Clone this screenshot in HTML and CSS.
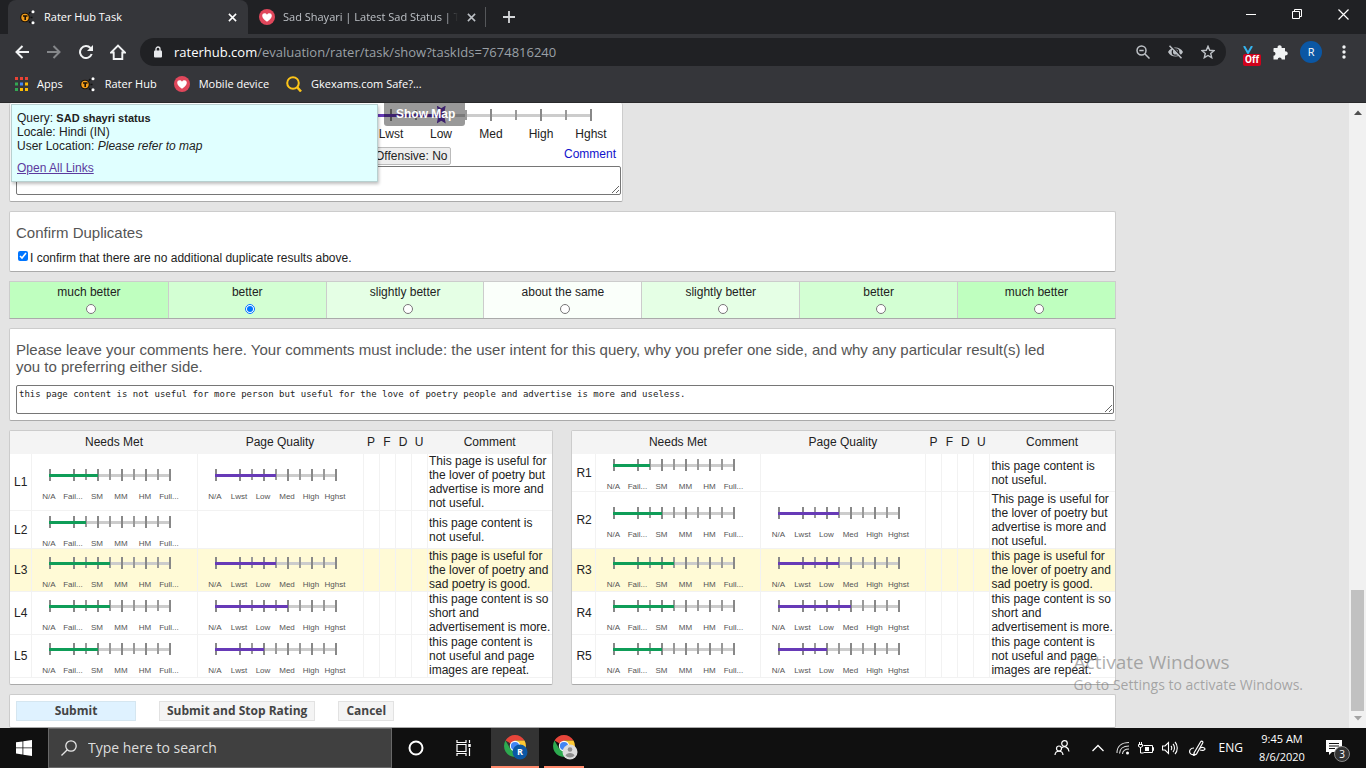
FILE: index.html
```html
<!DOCTYPE html>
<html lang="en">
<head>
<meta charset="utf-8">
<title>Rater Hub Task</title>
<link rel="stylesheet" href="styles.css">
</head>
<body>
<svg class="defs" aria-hidden="true">
  <symbol id="hub" viewBox="0 0 16 16"><circle cx="5" cy="8.500" r="4.800" fill="#1b1206"/><circle cx="5" cy="8.500" r="3.700" fill="#f29c1a"/><path d="M3 7h4.500M5.200 7v4" stroke="#1b1206" stroke-width="1.600"/><path d="M9 4.500l1.500-1.500M10.500 8.500h2M9 12.500l2 1.500" stroke="#111" stroke-width="1.600"/><circle cx="13" cy="2.800" r="1.500" fill="#fff"/><circle cx="13" cy="13.700" r="1.500" fill="#fff"/></symbol>
  <symbol id="heart" viewBox="0 0 16 16"><circle cx="8" cy="8" r="8" fill="#e0475b"/><path d="M8 12.800C5 10.500 3.200 8.800 3.200 6.700c0-2.700 3.400-3.300 4.800-1 1.400-2.300 4.800-1.700 4.800 1 0 2.100-1.800 3.800-4.800 6.100z" fill="#fff"/></symbol>
  <symbol id="close" viewBox="0 0 10 10"><path d="M1 1l8 8M9 1L1 9" fill="none" stroke="currentColor" stroke-width="1.700"/></symbol>
  <symbol id="chrome" viewBox="0 0 22 22"><path d="M11 11L1.500 5.500A11 11 0 0 1 20.500 5.500H11z" fill="#e6453a"/><path d="M11 5.500h9.500A11 11 0 0 1 11 22l4.800-8.300z" fill="#fcc934"/><path d="M1.500 5.500A11 11 0 0 0 11 22l4.800-8.300L11 11l-4.800 2.700z" fill="#2da94f"/><circle cx="11" cy="11" r="5.200" fill="#fff"/><circle cx="11" cy="11" r="4.100" fill="#4285f4"/></symbol>
</svg>

<header class="browser">
  <div class="tabstrip">
    <div class="tab tab-active">
      <svg class="favicon"><use href="#hub"/></svg><span class="tab-title">Rater Hub Task</span>
      <button class="icon-btn tab-close" aria-label="Close tab"><svg><use href="#close"/></svg></button>
    </div>
    <div class="tab tab-idle">
      <svg class="favicon"><use href="#heart"/></svg><span class="tab-title fade">Sad Shayari | Latest Sad Status | T</span>
      <button class="icon-btn tab-close" aria-label="Close tab"><svg><use href="#close"/></svg></button>
    </div>
    <button class="icon-btn new-tab" aria-label="New tab"><svg width="12" height="12" viewBox="0 0 12 12"><path d="M6 0v12M0 6h12" stroke="currentColor" stroke-width="1.800"/></svg></button>
    <div class="window-controls">
      <button class="icon-btn" aria-label="Minimize"><svg width="10" height="10" viewBox="0 0 10 10"><path d="M0 5.500h10" stroke="#fff"/></svg></button>
      <button class="icon-btn" aria-label="Restore"><svg width="10" height="10" viewBox="0 0 10 10" fill="none" stroke="#fff"><path d="M.5 2.500h7v7h-7zM2.500 2.500v-2h7v7h-2"/></svg></button>
      <button class="icon-btn" aria-label="Close"><svg width="11" height="11" viewBox="0 0 11 11"><path d="M.5.500l10 10M10.500.500l-10 10" stroke="#fff" stroke-width="1.200"/></svg></button>
    </div>
  </div>
  <div class="toolbar">
    <div class="nav">
      <button class="icon-btn" aria-label="Back"><svg width="14" height="14" viewBox="0 0 14 14" fill="none" stroke="#f1f3f4" stroke-width="2"><path d="M14 7H1.500M7.500 1l-6 6 6 6"/></svg></button>
      <button class="icon-btn" aria-label="Forward"><svg width="14" height="14" viewBox="0 0 14 14" fill="none" stroke="#85878a" stroke-width="2"><path d="M0 7h12.500M6.500 1l6 6-6 6"/></svg></button>
      <button class="icon-btn" aria-label="Reload"><svg width="14" height="14" viewBox="0 0 14 14"><path d="M12.700 9A6 6 0 1 1 11.500 3" fill="none" stroke="#f1f3f4" stroke-width="2"/><path d="M14 0v6H8z" fill="#f1f3f4"/></svg></button>
      <button class="icon-btn" aria-label="Home"><svg width="16" height="16" viewBox="0 0 16 16"><path d="M1 8.500h2.700V15h8.600V8.500H15L8 1.500z" fill="none" stroke="#f1f3f4" stroke-width="1.900"/></svg></button>
    </div>
    <div class="omnibox">
      <svg class="lock" width="8" height="12" viewBox="0 0 8 12"><path d="M2 5V3a2 2 0 0 1 4 0v2" fill="none" stroke="#e8eaed" stroke-width="1.300"/><rect y="4.500" width="8" height="7" rx="1" fill="#e8eaed"/></svg>
      <div class="url"><b>raterhub.com</b>/evaluation/rater/task/show?taskIds=7674816240</div>
      <svg width="14" height="14" viewBox="0 0 14 14" fill="none" stroke="#bdc1c6" stroke-width="1.500"><circle cx="5.500" cy="5.500" r="4.500"/><path d="M9 9l4.500 4.500M3.300 5.500h4.400"/></svg>
      <svg width="15" height="14" viewBox="0 0 15 14"><path d="M0 7C3 1 12 1 15 7 12 13 3 13 0 7z" fill="#bdc1c6"/><circle cx="7.500" cy="7" r="3.200" fill="none" stroke="#202124" stroke-width="1.300"/><path d="M2.500 0l12 12.500" stroke="#202124" stroke-width="1.500"/><path d="M1.500.800l12 12.500" stroke="#bdc1c6" stroke-width="1.500"/></svg>
      <svg width="14" height="14" viewBox="0 0 14 14"><path d="M7 1.300l1.700 4 4.200.4-3.200 2.800 1 4.200L7 10.500l-3.700 2.200 1-4.200L1.100 5.700l4.200-.4z" fill="none" stroke="#bdc1c6" stroke-width="1.400"/></svg>
    </div>
    <div class="extensions">
      <div class="ext"><svg width="10" height="8" viewBox="0 0 10 8"><path d="M1 0l4 7 4-7" fill="none" stroke="#35b4ee" stroke-width="2"/></svg><span>Off</span></div>
      <button class="icon-btn" aria-label="Extensions"><svg width="15" height="15" viewBox="0 0 15 15"><path d="M1 3h3.600a2.100 2.100 0 1 1 4 0H12v3.400a2.100 2.100 0 1 1 0 4V14.500H8.700a2 2 0 1 0-4 0H.5V10.700a2 2 0 1 0 0-4V3.500z" fill="#f1f3f4"/></svg></button>
      <button class="avatar">R</button>
      <button class="icon-btn menu" aria-label="Menu"><svg width="4" height="14" viewBox="0 0 4 14" fill="#f1f3f4"><circle cx="2" cy="2" r="1.700"/><circle cx="2" cy="7" r="1.700"/><circle cx="2" cy="12" r="1.700"/></svg></button>
    </div>
  </div>
  <nav class="bookmarks">
    <a href="#"><svg width="13" height="14" viewBox="0 0 13 14"><path d="M0 0h3v3H0zM5 0h3v3H5zM10 0h3v3h-3z" fill="#ea4335"/><path d="M0 5.500h3v3H0zM0 11h3v3H0z" fill="#34a853"/><path d="M5 5.500h3v3H5z" fill="#4285f4"/><path d="M10 5.500h3v3h-3zM5 11h3v3H5zM10 11h3v3h-3z" fill="#fbbc05"/></svg>Apps</a>
    <a href="#"><svg class="favicon"><use href="#hub"/></svg>Rater Hub</a>
    <a href="#"><svg class="favicon"><use href="#heart"/></svg>Mobile device</a>
    <a href="#"><svg width="16" height="16" viewBox="0 0 16 16" fill="none" stroke="#fcc419" stroke-width="2"><circle cx="7" cy="7" r="5.800"/><path d="M11 11l4 4.500" stroke-width="2.500"/></svg>Gkexams.com Safe?...</a>
  </nav>
</header>

<div class="viewport">
  <main class="page">
    <section class="card result">
      <input class="quality" type="range" min="0" max="8" value="2" aria-label="Page Quality">
      <div class="quality-labels"><span>Lwst</span><span>Low</span><span>Med</span><span>High</span><span>Hghst</span></div>
      <div class="result-actions"><button class="offensive">Offensive: No</button><a href="#">Comment</a></div>
      <textarea class="result-comment" aria-label="Result comment"></textarea>
    </section>

    <section class="card duplicates">
      <h2>Confirm Duplicates</h2>
      <label><input type="checkbox" checked>I confirm that there are no additional duplicate results above.</label>
    </section>

    <fieldset class="preference" aria-label="Side preference">
      <label class="much">much better<input type="radio" name="side"></label>
      <label class="better">better<input type="radio" name="side" checked></label>
      <label class="slight">slightly better<input type="radio" name="side"></label>
      <label class="same">about the same<input type="radio" name="side"></label>
      <label class="slight">slightly better<input type="radio" name="side"></label>
      <label class="better">better<input type="radio" name="side"></label>
      <label class="much">much better<input type="radio" name="side"></label>
    </fieldset>

    <section class="card comments">
      <h2><label for="comments">Please leave your comments here. Your comments must include: the user intent for this query, why you prefer one side, and why any particular result(s) led you to preferring either side.</label></h2>
      <textarea id="comments">this page content is not useful for more person but useful for the love of poetry people and advertise is more and useless.</textarea>
    </section>

    <div class="sides">
      <section class="card">
        <table class="ratings left">
          <colgroup><col class="c-id"><col class="c-scale"><col class="c-scale"><col class="c-flag"><col class="c-flag"><col class="c-flag"><col class="c-flag"><col></colgroup>
          <thead><tr><th></th><th>Needs Met</th><th>Page Quality</th><th>P</th><th>F</th><th>D</th><th>U</th><th>Comment</th></tr></thead>
          <tbody>
            <tr><td>L1</td>
              <td><div class="scale"><input class="nm" type="range" max="10" value="4" style="--v:4" aria-label="L1 Needs Met"><div class="marks"><span>N/A</span><span>Fail...</span><span>SM</span><span>MM</span><span>HM</span><span>Full...</span></div></div></td>
              <td><div class="scale"><input class="pq" type="range" max="10" value="5" style="--v:5" aria-label="L1 Page Quality"><div class="marks"><span>N/A</span><span>Lwst</span><span>Low</span><span>Med</span><span>High</span><span>Hghst</span></div></div></td>
              <td></td><td></td><td></td><td></td><td>This page is useful for the lover of poetry but advertise is more and not useful.</td></tr>
            <tr><td>L2</td>
              <td><div class="scale"><input class="nm" type="range" max="10" value="3" style="--v:3" aria-label="L2 Needs Met"><div class="marks"><span>N/A</span><span>Fail...</span><span>SM</span><span>MM</span><span>HM</span><span>Full...</span></div></div></td>
              <td></td>
              <td></td><td></td><td></td><td></td><td>this page content is not useful.</td></tr>
            <tr class="match"><td>L3</td>
              <td><div class="scale"><input class="nm" type="range" max="10" value="5" style="--v:5" aria-label="L3 Needs Met"><div class="marks"><span>N/A</span><span>Fail...</span><span>SM</span><span>MM</span><span>HM</span><span>Full...</span></div></div></td>
              <td><div class="scale"><input class="pq" type="range" max="10" value="5" style="--v:5" aria-label="L3 Page Quality"><div class="marks"><span>N/A</span><span>Lwst</span><span>Low</span><span>Med</span><span>High</span><span>Hghst</span></div></div></td>
              <td></td><td></td><td></td><td></td><td>this page is useful for the lover of poetry and sad poetry is good.</td></tr>
            <tr><td>L4</td>
              <td><div class="scale"><input class="nm" type="range" max="10" value="5" style="--v:5" aria-label="L4 Needs Met"><div class="marks"><span>N/A</span><span>Fail...</span><span>SM</span><span>MM</span><span>HM</span><span>Full...</span></div></div></td>
              <td><div class="scale"><input class="pq" type="range" max="10" value="6" style="--v:6" aria-label="L4 Page Quality"><div class="marks"><span>N/A</span><span>Lwst</span><span>Low</span><span>Med</span><span>High</span><span>Hghst</span></div></div></td>
              <td></td><td></td><td></td><td></td><td>this page content is so short and advertisement is more.</td></tr>
            <tr><td>L5</td>
              <td><div class="scale"><input class="nm" type="range" max="10" value="4" style="--v:4" aria-label="L5 Needs Met"><div class="marks"><span>N/A</span><span>Fail...</span><span>SM</span><span>MM</span><span>HM</span><span>Full...</span></div></div></td>
              <td><div class="scale"><input class="pq" type="range" max="10" value="4" style="--v:4" aria-label="L5 Page Quality"><div class="marks"><span>N/A</span><span>Lwst</span><span>Low</span><span>Med</span><span>High</span><span>Hghst</span></div></div></td>
              <td></td><td></td><td></td><td></td><td>this page content is not useful and page images are repeat.</td></tr>
          </tbody>
        </table>
      </section>
      <section class="card">
        <table class="ratings right">
          <colgroup><col class="c-id"><col class="c-scale"><col class="c-scale"><col class="c-flag"><col class="c-flag"><col class="c-flag"><col class="c-flag"><col></colgroup>
          <thead><tr><th></th><th>Needs Met</th><th>Page Quality</th><th>P</th><th>F</th><th>D</th><th>U</th><th>Comment</th></tr></thead>
          <tbody>
            <tr><td>R1</td>
              <td><div class="scale"><input class="nm" type="range" max="10" value="3" style="--v:3" aria-label="R1 Needs Met"><div class="marks"><span>N/A</span><span>Fail...</span><span>SM</span><span>MM</span><span>HM</span><span>Full...</span></div></div></td>
              <td></td>
              <td></td><td></td><td></td><td></td><td>this page content is not useful.</td></tr>
            <tr><td>R2</td>
              <td><div class="scale"><input class="nm" type="range" max="10" value="4" style="--v:4" aria-label="R2 Needs Met"><div class="marks"><span>N/A</span><span>Fail...</span><span>SM</span><span>MM</span><span>HM</span><span>Full...</span></div></div></td>
              <td><div class="scale"><input class="pq" type="range" max="10" value="5" style="--v:5" aria-label="R2 Page Quality"><div class="marks"><span>N/A</span><span>Lwst</span><span>Low</span><span>Med</span><span>High</span><span>Hghst</span></div></div></td>
              <td></td><td></td><td></td><td></td><td>This page is useful for the lover of poetry but advertise is more and not useful.</td></tr>
            <tr class="match"><td>R3</td>
              <td><div class="scale"><input class="nm" type="range" max="10" value="5" style="--v:5" aria-label="R3 Needs Met"><div class="marks"><span>N/A</span><span>Fail...</span><span>SM</span><span>MM</span><span>HM</span><span>Full...</span></div></div></td>
              <td><div class="scale"><input class="pq" type="range" max="10" value="5" style="--v:5" aria-label="R3 Page Quality"><div class="marks"><span>N/A</span><span>Lwst</span><span>Low</span><span>Med</span><span>High</span><span>Hghst</span></div></div></td>
              <td></td><td></td><td></td><td></td><td>this page is useful for the lover of poetry and sad poetry is good.</td></tr>
            <tr><td>R4</td>
              <td><div class="scale"><input class="nm" type="range" max="10" value="5" style="--v:5" aria-label="R4 Needs Met"><div class="marks"><span>N/A</span><span>Fail...</span><span>SM</span><span>MM</span><span>HM</span><span>Full...</span></div></div></td>
              <td><div class="scale"><input class="pq" type="range" max="10" value="6" style="--v:6" aria-label="R4 Page Quality"><div class="marks"><span>N/A</span><span>Lwst</span><span>Low</span><span>Med</span><span>High</span><span>Hghst</span></div></div></td>
              <td></td><td></td><td></td><td></td><td>this page content is so short and advertisement is more.</td></tr>
            <tr><td>R5</td>
              <td><div class="scale"><input class="nm" type="range" max="10" value="4" style="--v:4" aria-label="R5 Needs Met"><div class="marks"><span>N/A</span><span>Fail...</span><span>SM</span><span>MM</span><span>HM</span><span>Full...</span></div></div></td>
              <td><div class="scale"><input class="pq" type="range" max="10" value="4" style="--v:4" aria-label="R5 Page Quality"><div class="marks"><span>N/A</span><span>Lwst</span><span>Low</span><span>Med</span><span>High</span><span>Hghst</span></div></div></td>
              <td></td><td></td><td></td><td></td><td>this page content is not useful and page images are repeat.</td></tr>
          </tbody>
        </table>
      </section>
    </div>

    <section class="card actions">
      <button class="primary">Submit</button><button>Submit and Stop Rating</button><button>Cancel</button>
    </section>
  </main>

  <div class="scrollbar" aria-hidden="true">
    <svg width="8" height="5" viewBox="0 0 8 5"><path d="M0 5l4-4.500L8 5z" fill="#505050"/></svg>
    <div class="track"><div class="thumb"></div></div>
    <svg width="8" height="5" viewBox="0 0 8 5"><path d="M0 0l4 4.500L8 0z" fill="#a3a3a3"/></svg>
  </div>

  <button class="show-map">Show Map</button>
  <aside class="query">
    <div>Query: <b>SAD shayri status</b></div>
    <div>Locale: Hindi (IN)</div>
    <div>User Location: <i>Please refer to map</i></div>
    <a href="#">Open All Links</a>
  </aside>
  <div class="watermark"><div class="wm-title">Activate Windows</div><div>Go to Settings to activate Windows.</div></div>
</div>

<footer class="taskbar">
  <button class="start" aria-label="Start"><svg width="16" height="16" viewBox="0 0 16 16" fill="#fff"><path d="M0 2.300l6.500-.9v6.100H0zM7.300 1.300L16 0v7.500H7.300zM0 8.300h6.500v6.200L0 13.600zM7.300 8.300H16V16l-8.700-1.300z"/></svg></button>
  <label class="search"><svg width="16" height="16" viewBox="0 0 16 16" fill="none" stroke="#e6e6e6" stroke-width="1.300"><circle cx="10" cy="6" r="5.200"/><path d="M6.300 9.700L.5 15.500"/></svg><input type="text" placeholder="Type here to search" aria-label="Search"></label>
  <button class="tb" aria-label="Cortana"><svg width="16" height="16" viewBox="0 0 16 16"><circle cx="8" cy="8" r="6.500" fill="none" stroke="#fff" stroke-width="2"/></svg></button>
  <button class="tb" aria-label="Task view"><svg width="16" height="16" viewBox="0 0 16 16" fill="none" stroke="#fff" stroke-width="1.200"><path d="M1 0v2.500h9V0M1 16v-2.500h9V16M1 4.500h9v7H1zM13.500 0v3M13.500 8v8"/><path d="M13.500 4v3" stroke-width="2.500"/></svg></button>
  <button class="tb app current" aria-label="Chrome, R"><svg width="26" height="26" viewBox="0 0 26 26"><use href="#chrome" width="22" height="22"/><circle cx="16" cy="17" r="7.500" fill="#0b57a4"/><text x="16" y="20" text-anchor="middle">R</text></svg></button>
  <button class="tb app" aria-label="Chrome, guest"><svg width="26" height="26" viewBox="0 0 26 26"><use href="#chrome" width="22" height="22"/><circle cx="17" cy="17" r="7.500" fill="#dcdcdc"/><circle cx="17" cy="14.500" r="2.300" fill="#8d8d8d"/><path d="M12.500 20.500c1-3.500 8-3.500 9 0-2 2.500-7 2.500-9 0z" fill="#8d8d8d"/></svg></button>
  <div class="tray">
    <svg width="16" height="16" viewBox="0 0 16 16" fill="none" stroke="#fff" stroke-width="1.200"><circle cx="10.500" cy="3.500" r="2.800"/><circle cx="5" cy="8.500" r="2.500"/><path d="M1 15c.3-5 7.700-5 8 0M7.500 8c3-2.500 7-1 7.500 3.500"/></svg>
    <svg class="chevron" width="12" height="8" viewBox="0 0 12 8" fill="none" stroke="#fff" stroke-width="1.300"><path d="M.5 7L6 1.500 11.500 7"/></svg>
    <svg width="14" height="14" viewBox="0 0 14 14" fill="none" stroke="#ddd" stroke-width="1.100"><path d="M1 12C1 5 6 1.500 13 1.500M3.500 12.500C3.500 8 7 5 13 5M6.500 13c0-3 2.500-5 6.500-5"/><circle cx="11.500" cy="12" r="1.500" fill="#fff" stroke="none"/></svg>
    <svg width="16" height="14" viewBox="0 0 16 14" fill="none" stroke="#fff"><path d="M5.500 4.500h9v7h-9M14.500 6.500h1v3h-1M2.500 6v6h3M.5 3.500h4v2l-2 1-2-1zM1.500 1v2M3.500 1v2"/><path d="M7 6h4v4H7z" fill="#fff" stroke="none"/></svg>
    <svg width="16" height="14" viewBox="0 0 16 14" fill="none" stroke="#fff" stroke-width="1.100"><path d="M.5 5v4H3l3.500 3.500v-11L3 5zM9 5c1 1 1 3 0 4M11 3c2 2 2 6 0 8M13 1c3 3 3 9 0 12"/></svg>
    <svg class="pen" width="17" height="16" viewBox="0 0 17 16" fill="none" stroke="#fff" stroke-width="1.200"><path d="M5 13L11.500 2c1-1.500 3-.5 2.200 1L7.500 14l-2.700 1.500zM5 8c-4 0-5 3-4 5s4 2 5 1M10 9c3-3 6-1 6 0s-2 2-5 1"/></svg>
    <span class="lang">ENG</span>
    <div class="clock"><div>9:45 AM</div><div>8/6/2020</div></div>
    <div class="notify"><svg width="16" height="16" viewBox="0 0 16 16"><path d="M0 0h16v12H6l-3 3v-3H0z" fill="#fff"/><path d="M3 3.500h10M3 6h10M3 8.500h6" stroke="#111"/></svg><span>3</span></div>
  </div>
</footer>
</body>
</html>
```
FILE: styles.css
```css
* { box-sizing: border-box; }
body {
  margin: 0;
  height: 100vh;
  display: flex;
  flex-direction: column;
  overflow: hidden;
  font: 12px/14px "Liberation Sans", Arial, sans-serif;
  color: #222;
}
button, input, textarea { font: inherit; color: inherit; margin: 0; }
.defs { display: none; }
.favicon { width: 16px; height: 16px; flex: none; }
.icon-btn {
  display: flex;
  align-items: center;
  justify-content: center;
  padding: 0;
  border: 0;
  background: none;
}

/* Browser chrome */
.browser {
  flex: none;
  background: #35363a;
  border-bottom: 1px solid #29292b;
  color: #fff;
  font: 11px/16px "Open Sans", sans-serif;
}
.tabstrip { display: flex; height: 34px; padding-left: 8px; background: #202124; }
.tab {
  display: flex;
  align-items: center;
  width: 240px;
  padding: 0 9px 0 12px;
  color: #bdc1c6;
}
.tab-active { background: #35363a; border-radius: 8px 8px 0 0; color: #fff; }
.tab-idle {
  width: 238px;
  padding: 0 8px 0 11px;
  background: linear-gradient(#55575a, #55575a) right 7px / 1px 20px no-repeat;
}
.tab-title { flex: 1; margin-left: 8px; overflow: hidden; white-space: nowrap; }
.fade {
  -webkit-mask-image: linear-gradient(90deg, #000 93%, transparent);
  mask-image: linear-gradient(90deg, #000 93%, transparent);
}
.tab-close { width: 14px; height: 16px; margin-left: 6px; }
.tab-close svg { width: 9px; height: 9px; }
.new-tab { width: 46px; color: #d5d7da; }
.window-controls { display: flex; margin-left: auto; padding-bottom: 6px; }
.window-controls .icon-btn { width: 46px; }
.toolbar { display: flex; align-items: center; height: 36px; }
.nav { display: flex; padding: 0 6px; }
.nav .icon-btn { width: 32px; height: 28px; }
.omnibox {
  flex: 1;
  display: flex;
  align-items: center;
  gap: 18px;
  height: 28px;
  padding: 0 11px 0 14px;
  border-radius: 14px;
  background: #202124;
}
.lock { margin-right: -6px; }
.url { flex: 1; font-size: 13px; color: #9aa0a6; }
.url b { font-weight: 400; color: #fff; }
.extensions { display: flex; align-items: center; gap: 12px; width: 140px; padding-left: 17px; }
.ext { display: flex; flex-direction: column; align-items: center; padding-top: 8px; }
.ext svg { align-self: flex-start; }
.ext span {
  padding: 0 2px;
  border-radius: 2px;
  background: #d0021b;
  font: 700 10px/12px Roboto, sans-serif;
}
.avatar {
  width: 22px;
  height: 22px;
  padding: 0;
  border: 0;
  border-radius: 50%;
  background: #0b57a4;
  color: #fff;
}
.menu { margin-left: 8px; }
.bookmarks { display: flex; align-items: center; gap: 17px; height: 32px; padding: 0 0 4px 15px; }
.bookmarks a { display: flex; align-items: center; gap: 9px; color: #fff; text-decoration: none; }

/* Page */
.viewport { position: relative; flex: 1; min-height: 0; display: flex; overflow: hidden; background: #e4e4e4; }
.page { flex: 1; display: flex; flex-direction: column; gap: 9px; padding-left: 9px; }
.page > * { width: 82.6%; }
.card {
  background: #fff;
  border: 1px solid #ccc;
  border-bottom-color: #aaa;
  border-radius: 2px;
}
h2 { margin: 0; font-size: 15px; line-height: 17px; font-weight: 400; color: #555; }
textarea {
  display: block;
  width: 100%;
  height: 29px;
  padding: 2px;
  border: 1px solid #767676;
  border-radius: 2px;
  background: #fff;
  font: 9px/12px "DejaVu Sans Mono", monospace;
  resize: vertical;
}
.page > .result { width: 614px; max-width: 100%; padding: 2px 1px 6px 6px; border-top: 0; display: flex; flex-direction: column; }
.quality {
  -webkit-appearance: none;
  appearance: none;
  align-self: flex-end;
  width: 252px;
  height: 19px;
  margin-right: 29px;
  background:
    linear-gradient(#673ab7, #673ab7) 0 9px / 102px 3px no-repeat,
    repeating-linear-gradient(90deg, #888 0 2px, transparent 2px 50px) 0 4px / 252px 12px no-repeat,
    repeating-linear-gradient(90deg, #999 0 2px, transparent 2px 50px) 75px 5px / 177px 10px no-repeat,
    linear-gradient(#ccc, #ccc) 0 9px / 252px 3px no-repeat;
}
.quality-labels { display: grid; grid-template-columns: repeat(5, 50px); justify-content: end; padding: 3px 5px 0 0; text-align: center; }
.result-actions { display: flex; justify-content: space-between; align-items: flex-start; padding: 6px 5px 1px 355px; }
.result-actions a { color: #11c; text-decoration: none; }
.offensive { height: 18px; padding: 0 3px; border: 1px solid #bbb; border-radius: 2px; background: #eee; }
.quality::-webkit-slider-thumb {
  -webkit-appearance: none;
  width: 9px;
  height: 18px;
  background: #673ab7;
  clip-path: polygon(0 0, 50% 15%, 100% 0, 80% 50%, 100% 100%, 50% 85%, 0 100%, 20% 50%);
  transform: translateX(36px);
}
.duplicates { padding: 12px 6px 6px; }
.duplicates label { display: flex; align-items: center; gap: 2px; padding-top: 10px; }
.duplicates input { width: 10px; height: 10px; margin: 0 0 4px 2px; }
.preference {
  display: grid;
  grid-template-columns: repeat(7, 1fr);
  min-width: 0;
  margin: 0;
  padding: 0;
  border: 1px solid #ccc;
  border-bottom-color: #aaa;
}
.preference label { display: flex; flex-direction: column; align-items: center; gap: 5px; padding: 3px 0 4px; border-left: 1px solid #ccc; }
.preference label:first-child { border-left: 0; }
.preference input { width: 10px; height: 10px; margin-left: 5px; }
.much { background: #bfffbf; }
.better { background: #d3ffd3; }
.slight { background: #e5ffe5; }
.same { background: #fafffa; }
.comments { padding: 12px 1px 6px 6px; }
.comments h2 { margin-bottom: 10px; padding-right: 60px; }
.sides { display: grid; grid-template-columns: 1fr 1fr; gap: 18px; }

/* Rating tables */
.sides .card { padding-bottom: 6px; }
.ratings { width: 100%; table-layout: fixed; border-spacing: 0; }
.left .c-id { width: 21px; }
.right .c-id { width: 23px; }
.left .c-scale { width: 166px; }
.right .c-scale { width: 165px; }
.c-flag { width: 16px; }
.ratings th { height: 23px; padding: 0 0 2px; background: #f4f4f4; font-weight: 400; }
.ratings td { padding: 0; border-left: 1px solid #f2f2f2; border-bottom: 1px solid #f2f2f2; }
.ratings td:first-child { border-left: 0; padding-left: 4px; }
.ratings td:last-child { padding: 0 1px; }
.match { background: #fffad6; }
.scale { width: 144px; height: 37px; margin-left: 5px; padding-top: 5px; overflow: hidden; }
.scale input {
  -webkit-appearance: none;
  appearance: none;
  display: block;
  width: 122px;
  height: 12px;
  margin-left: 12px;
  background:
    linear-gradient(var(--fill), var(--fill)) 0 5px / calc(var(--v) * 12px + 1px) 3px no-repeat,
    linear-gradient(90deg, #888 2px, transparent 2px) 0 0 / 24px 12px repeat-x,
    repeating-linear-gradient(90deg, #999 0 2px, transparent 2px 24px) 36px 0 / 86px 11px no-repeat,
    linear-gradient(#ccc, #ccc) 0 5px / 122px 3px no-repeat;
}
.scale input::-webkit-slider-thumb { -webkit-appearance: none; width: 0; height: 12px; }
.nm { --fill: #0f9d58; }
.pq { --fill: #673ab7; }
.marks { display: grid; grid-template-columns: repeat(6, 24px); padding-top: 10px; font-size: 8px; line-height: 12px; color: #555; }
.marks span { justify-self: center; }

.actions { display: flex; gap: 23px; padding: 6px; }
.actions button {
  height: 20px;
  padding: 0 7px;
  border: 1px solid #e2e2e2;
  background: #f4f4f4;
  color: #444;
  font: 700 12px/16px "Open Sans", sans-serif;
}
.actions .primary { width: 120px; background: #dff2ff; border-color: #d5e6f0; }

.scrollbar { width: 17px; flex: none; display: flex; flex-direction: column; align-items: center; justify-content: space-between; padding: 7px 0; background: #f1f1f1; }
.track { flex: 1; display: flex; flex-direction: column; justify-content: flex-end; padding: 5px 0; }
.thumb { width: 13px; height: 20.5%; background: #c1c1c1; }

/* Overlays */
.query {
  position: absolute;
  left: 11px;
  top: 1px;
  width: 367px;
  padding: 6px 5px;
  border: 1px solid #b8d0d0;
  background: #e0ffff;
  box-shadow: 1px 2px 3px rgba(0, 0, 0, .25);
}
.query a { display: block; margin-top: 8px; color: #5c3a9e; }
.query b { font-size: 11px; }
.show-map {
  position: absolute;
  left: 384px;
  top: 0;
  padding: 4px 10px 5px 12px;
  border: 0;
  border-radius: 0 0 3px 3px;
  background: rgba(0, 0, 0, .4);
  color: #fff;
  font-weight: 700;
}
.watermark { position: absolute; right: 63px; bottom: 34px; font: 14px/18px "Open Sans", sans-serif; color: rgba(120, 120, 120, .6); pointer-events: none; }
.wm-title { font-size: 19px; line-height: 28px; }

/* Taskbar */
.taskbar { flex: none; display: flex; height: 40px; background: #101010; color: #fff; font: 12px/18px "Open Sans", sans-serif; }
.taskbar button { display: flex; align-items: center; justify-content: center; padding: 0; border: 0; background: none; }
.taskbar .start { width: 48px; }
.search { display: flex; align-items: center; gap: 11px; width: 344px; padding: 0 12px; border: 1px solid #686868; background: #404040; }
.search input { flex: 1; min-width: 0; padding: 0; border: 0; background: none; font-size: 14px; }
.search input::placeholder { color: #ddd; opacity: 1; }
.taskbar .tb { width: 48px; }
.taskbar .app { width: 40px; margin-left: 5px; padding: 2px 0 0 4px; border-bottom: 2px solid #ff8a6c; }
.taskbar .current { width: 48px; margin-left: 3px; background: #333; }
.app text { font: 700 9px "Open Sans", sans-serif; fill: #fff; }
.tray { display: flex; align-items: center; gap: 8px; margin-left: auto; padding-right: 18px; }
.chevron { margin: 0 4px 0 14px; }
.pen { margin-left: 3px; }
.lang { margin-left: 5px; }
.clock { width: 60px; text-align: center; margin: 0 6px 0 1px; font-size: 11px; }
.notify { position: relative; display: flex; width: 22px; }
.notify span {
  position: absolute;
  left: 8px;
  top: 6px;
  width: 16px;
  height: 16px;
  border: 1px solid #888;
  border-radius: 50%;
  background: #333;
  font-size: 10px;
  line-height: 14px;
  text-align: center;
}
```
